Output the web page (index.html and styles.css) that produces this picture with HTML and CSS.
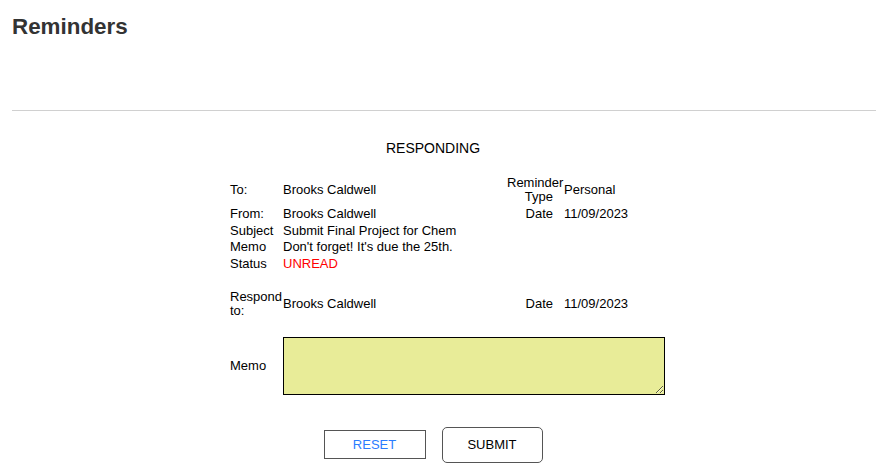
FILE: index.html
```html
<!DOCTYPE html>
<html lang="en">
<head>
<meta charset="utf-8">
<title>Reminders</title>
<link rel="stylesheet" href="styles.css">
</head>
<body>
<div class="page">
  <h1 class="title">Reminders</h1>
  <div class="divider"></div>
  <div class="main">
    <div class="resp-title">RESPONDING</div>
    <div class="grid details">
      <div class="lbl">To:</div>
      <div class="val">Brooks Caldwell</div>
      <div class="rlbl">Reminder Type</div>
      <div class="val">Personal</div>

      <div class="lbl">From:</div>
      <div class="val">Brooks Caldwell</div>
      <div class="rlbl">Date</div>
      <div class="val">11/09/2023</div>

      <div class="lbl">Subject</div>
      <div class="val span3">Submit Final Project for Chem</div>

      <div class="lbl">Memo</div>
      <div class="val span3">Don't forget! It's due the 25th.</div>

      <div class="lbl">Status</div>
      <div class="val span3 unread">UNREAD</div>
    </div>
    <div class="grid respond">
      <div class="lbl">Respond to:</div>
      <div class="val">Brooks Caldwell</div>
      <div class="rlbl">Date</div>
      <div class="val">11/09/2023</div>
    </div>
    <div class="grid memo-row">
      <div class="lbl">Memo</div>
      <div class="val span3"><textarea class="memo-input"></textarea></div>
    </div>
    <div class="actions">
      <button class="btn btn-reset" type="button">RESET</button>
      <button class="btn btn-submit" type="button">SUBMIT</button>
    </div>
  </div>
</div>
</body>
</html>
```
FILE: styles.css
```css
* { box-sizing: border-box; }
body {
  margin: 0;
  font-family: "Liberation Sans", Arial, sans-serif;
  color: #000;
  background: #fff;
}
.page {
  padding: 14px 12px 0;
}
.title {
  margin: 0;
  font-size: 22.4px;
  line-height: 25px;
  font-weight: bold;
  color: #333;
}
.divider {
  margin-top: 71px;
  height: 1px;
  background: #d0d0d0;
}
.main {
  padding-right: 22px;
  margin-top: 29px;
}
.resp-title {
  text-align: center;
  font-size: 14px;
  line-height: 16px;
}
.grid {
  display: grid;
  grid-template-columns: 53px 224px 57px 72px;
  width: 406px;
  margin: 0 auto;
  align-items: center;
  font-size: 13px;
  line-height: 14px;
}
.grid > div {
  padding: 1.333px 0;
}
.details { margin-top: 19px; }
.respond { margin-top: 16.67px; }
.memo-row { margin-top: 16px; }
.rlbl {
  text-align: right;
  padding-right: 11px !important;
}
.span3 { grid-column: 2 / span 3; }
.unread { color: #f00; }
.memo-input {
  display: block;
  width: 382px;
  height: 58px;
  margin: 0;
  padding: 2px;
  border: 1px solid #000;
  background: #e8ec98;
  font-family: "Liberation Sans", Arial, sans-serif;
  font-size: 13px;
}
.actions {
  display: flex;
  justify-content: center;
  align-items: baseline;
  gap: 16px;
  margin-top: 30.7px;
}
.btn {
  font-family: "Liberation Sans", Arial, sans-serif;
  font-size: 13px;
  background: #fff;
  border: 1px solid #555;
  padding: 0;
  margin: 0;
}
.btn-reset {
  width: 102px;
  height: 29px;
  color: #2b7cff;
  border-radius: 0;
}
.btn-submit {
  width: 101px;
  height: 36px;
  color: #000;
  border-radius: 5px;
}
```
